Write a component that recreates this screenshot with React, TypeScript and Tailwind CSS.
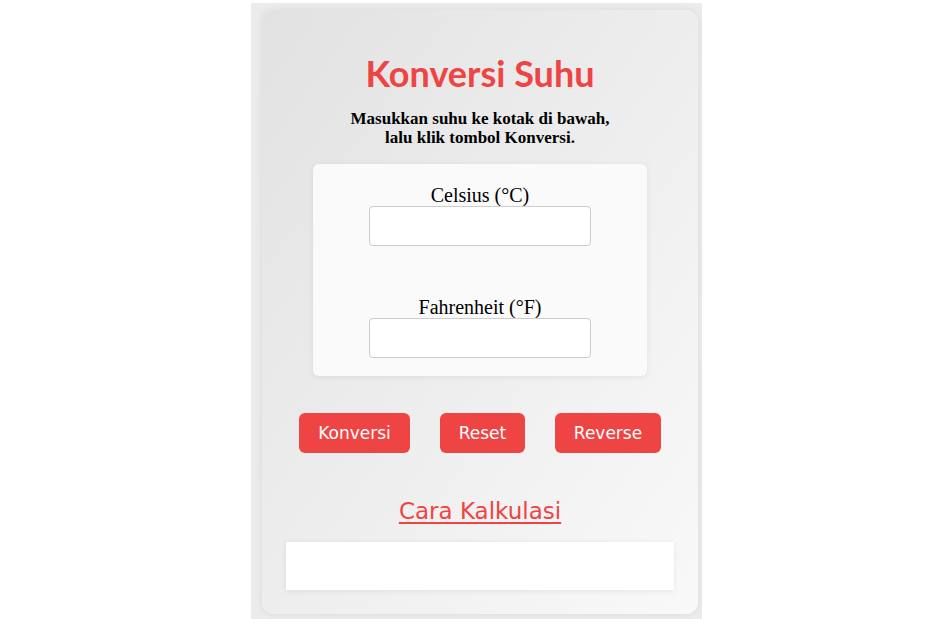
export default function App() {
  return (
    <div className="min-h-screen bg-white">
      <div className="ml-[251px] mt-[3px] w-[451px] h-[616px] bg-[#ececec] pl-[11px] pt-[7px]">
        {/* Card */}
        <div className="w-[436px] h-[604px] rounded-[12px] bg-gradient-to-br from-[#e2e2e2] to-[#f9f9f9] shadow-[0_0_8px_rgba(0,0,0,0.08)] px-6 flex flex-col items-center">
          <h1 className="mt-[40px] text-[36px] leading-[46px] font-bold text-[#ef4444] font-['Lato',sans-serif]">
            Konversi Suhu
          </h1>
          <p className="mt-[13px] text-center text-[17px] leading-[19px] font-bold text-black font-['Liberation_Serif',serif]">
            Masukkan suhu ke kotak di bawah,
            <br />
            lalu klik tombol Konversi.
          </p>

          {/* Form box */}
          <div className="mt-[17px] w-[334px] h-[212px] rounded-[6px] bg-[#fafafa] shadow-[0_1px_6px_rgba(0,0,0,0.08)] flex flex-col items-center pt-[20px]">
            <label className="text-[20px] leading-[22px] text-black font-['Liberation_Serif',serif]">
              Celsius (°C)
            </label>
            <input
              type="text"
              className="w-[222px] h-[40px] bg-white border border-[#cccccc] rounded-[4px] outline-none"
            />
            <label className="mt-[50px] text-[20px] leading-[22px] text-black font-['Liberation_Serif',serif]">
              Fahrenheit (°F)
            </label>
            <input
              type="text"
              className="w-[222px] h-[40px] bg-white border border-[#cccccc] rounded-[4px] outline-none"
            />
          </div>

          {/* Buttons */}
          <div className="mt-[37px] flex gap-[30px] font-['DejaVu_Sans',sans-serif]">
            <button className="w-[111px] h-[40px] rounded-[6px] bg-[#ef4444] text-white text-[17px] pt-[2px]">
              Konversi
            </button>
            <button className="w-[85px] h-[40px] rounded-[6px] bg-[#ef4444] text-white text-[17px] pt-[2px]">
              Reset
            </button>
            <button className="w-[106px] h-[40px] rounded-[6px] bg-[#ef4444] text-white text-[17px] pt-[2px]">
              Reverse
            </button>
          </div>

          <a
            href="#"
            className="mt-[44px] text-[23px] leading-[28px] font-medium text-[#ef4444] underline decoration-2 underline-offset-[3px] font-['DejaVu_Sans',sans-serif]"
          >
            Cara Kalkulasi
          </a>

          <div className="mt-[17px] w-full h-[48px] bg-white shadow-[0_1px_6px_rgba(0,0,0,0.08)]" />
        </div>
      </div>
    </div>
  );
}
